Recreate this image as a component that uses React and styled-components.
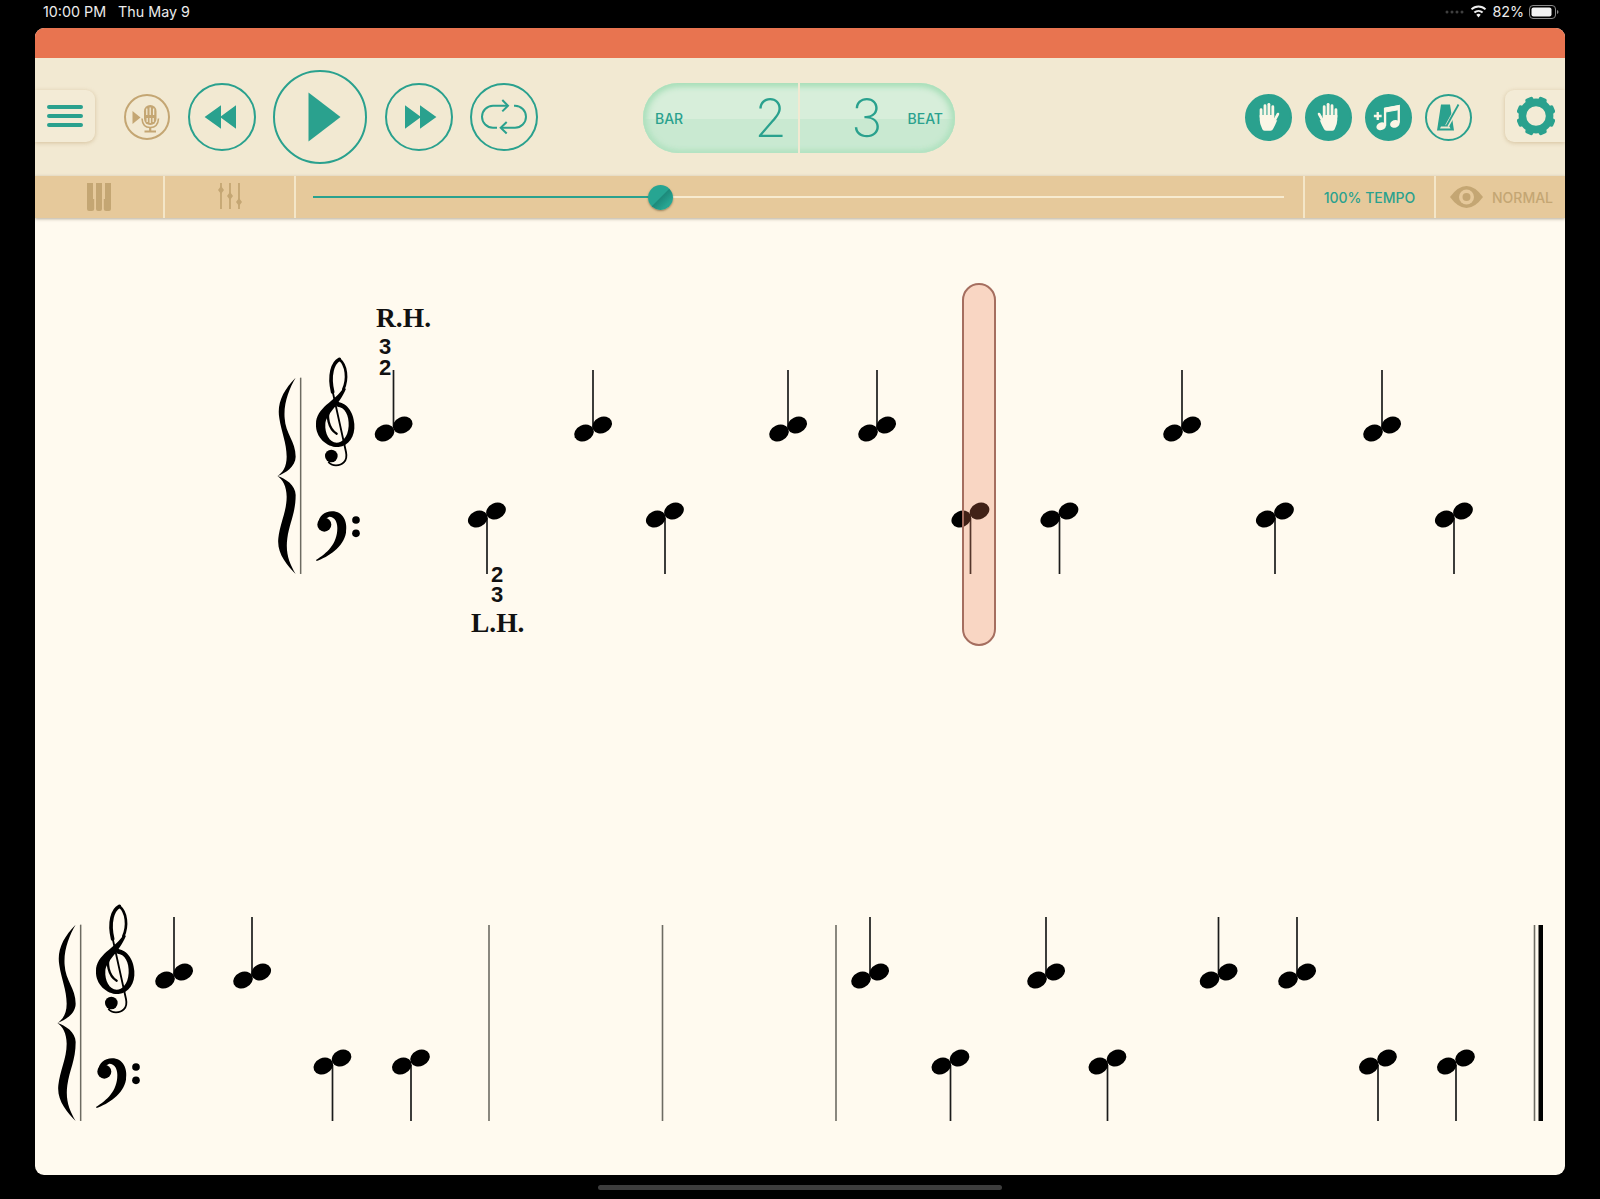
import styled, { createGlobalStyle } from "styled-components";

const TEAL = "#2aa18e";
const TAN = "#c4a673";

const GlobalStyle = createGlobalStyle`
  html, body {
    margin: 0;
    height: 100%;
    background: #000;
    overflow: hidden;
  }
`;

const Page = styled.div`
  width: 1600px;
  height: 1199px;
  background: #000;
  display: flex;
  flex-direction: column;
  font-family: Inter, "Liberation Sans", sans-serif;
`;

// STATUS BAR
const StatusBar = styled.div`
  height: 28px;
  display: flex;
  align-items: center;
  justify-content: space-between;
  padding: 0 41px 5px 43px;
  box-sizing: border-box;
  color: #ececec;
  font-size: 14.3px;
`;

const StatusGroup = styled.div`
  display: flex;
  align-items: center;
  gap: ${(p) => p.$gap || 12}px;
`;

const AppWindow = styled.div`
  width: 1530px;
  height: 1147px;
  margin-left: 35px;
  border-radius: 9px;
  overflow: hidden;
  background: #fffaef;
  display: flex;
  flex-direction: column;
`;

const TitleBar = styled.div`
  height: 30px;
  background: #e87450;
  flex: none;
`;

// TOOLBAR
const Toolbar = styled.div`
  height: 118px;
  flex: none;
  background: #f2e9d2;
  display: flex;
  align-items: center;
  justify-content: space-between;
`;

const Group = styled.div`
  display: flex;
  align-items: center;
  gap: ${(p) => p.$gap}px;
`;

const SideButton = styled.div`
  width: 60px;
  height: 52px;
  display: flex;
  align-items: center;
  justify-content: center;
  box-sizing: border-box;
  background: #f3ebd6;
  border-radius: ${(p) => (p.$right ? "9px 0 0 9px" : "0 9px 9px 0")};
  box-shadow: 0 1px 4px rgba(170, 135, 80, 0.4);
  margin-${(p) => (p.$right ? "left" : "right")}: ${(p) => (p.$right ? 33.5 : 29)}px;
  padding-left: ${(p) => (p.$right ? 2 : 0)}px;
  margin-top: -2px;
`;

const RoundButton = styled.div`
  width: ${(p) => p.$size}px;
  height: ${(p) => p.$size}px;
  flex: none;
  box-sizing: border-box;
  border-radius: 50%;
  border: 2px solid ${(p) => p.$color || TEAL};
  background: ${(p) => (p.$filled ? TEAL : "transparent")};
  display: flex;
  align-items: center;
  justify-content: center;
`;

const Counter = styled.div`
  width: 312px;
  height: 70px;
  margin-left: 105px;
  margin-top: 2px;
  border-radius: 35px;
  overflow: hidden;
  display: flex;
  position: relative;
  background: linear-gradient(#d7eeda 0 51%, #c9e9d1 51% 100%);
  box-shadow: inset 0 3px 6px #a9dfb9, inset 0 -2px 5px #b5e3c3, inset 4px 0 7px #b5e3c3, inset -4px 0 7px #b5e3c3;
  color: ${TEAL};
`;

const CounterHalf = styled.div`
  width: 50%;
  flex: none;
  box-sizing: border-box;
  display: flex;
  align-items: center;
  justify-content: space-between;
  padding: ${(p) => p.$padding};
  & + & {
    border-left: 2px solid #f2e9d2;
    margin-left: -1px;
  }
`;

const CounterLabel = styled.span`
  font-size: 14px;
  font-weight: 500;
  margin-top: 1px;
`;

const CounterValue = styled.span`
  font-size: 53px;
  font-weight: 200;
  line-height: 70px;
`;

// TEMPO BAR
const TempoBar = styled.div`
  height: 42px;
  flex: none;
  background: #e6c99b;
  display: flex;
  box-shadow: 0 1px 3px rgba(90, 80, 60, 0.45);
  position: relative;
`;

const TempoCell = styled.div`
  width: ${(p) => p.$width}px;
  flex: none;
  display: flex;
  align-items: center;
  justify-content: center;
  gap: 9px;
  box-sizing: border-box;
  padding-left: ${(p) => (p.$last ? 2 : 0)}px;
  border-right: ${(p) => (p.$last ? "none" : "2px solid #f4e6c8")};
  font-size: 14px;
  font-weight: 500;
  color: ${(p) => p.$color || TEAL};
`;

const SliderCell = styled.div`
  flex: 1;
  display: flex;
  align-items: center;
  padding: 0 19px 0 17px;
  border-right: 2px solid #f4e6c8;
`;

const SliderTrack = styled.div`
  height: 2px;
  flex: 1;
  background: #f7ebd0;
  position: relative;
`;

const SliderFill = styled.div`
  height: 2px;
  background: ${TEAL};
`;

const SliderKnob = styled.div`
  position: absolute;
  top: -11.5px;
  width: 25px;
  height: 25px;
  margin-left: -12px;
  border-radius: 50%;
  background: linear-gradient(135deg, #27a592 0 48%, #1d8a7b 52%, #27a592 78%);
  box-shadow: 0 1px 2px rgba(80, 60, 30, 0.5);
`;

// SCORE
const Score = styled.div`
  flex: 1;
  display: flex;
  flex-direction: column;
  padding-top: 65px;
`;

const SystemWrap = styled.div`
  position: relative;
  height: ${(p) => p.$height}px;
  margin-top: ${(p) => p.$top || 0}px;
`;

const Canvas = styled.svg`
  display: block;
  width: 1530px;
  height: 100%;
`;

const PlayHead = styled.div`
  position: absolute;
  left: 927px;
  top: 0;
  width: 34px;
  height: 363px;
  box-sizing: border-box;
  border: 2px solid #a56e5f;
  border-radius: 17px;
  background: rgba(232, 122, 84, 0.28);
`;

const HandLabel = styled.text`
  font-family: "Liberation Serif", serif;
  font-weight: 700;
  font-size: 27.5px;
  fill: #111;
`;

const Fingering = styled.text`
  font-family: "Liberation Sans", sans-serif;
  font-weight: 700;
  font-size: 22px;
  fill: #111;
  text-anchor: middle;
`;

const HomeIndicator = styled.div`
  width: 404px;
  height: 5px;
  margin: 10px auto 0;
  border-radius: 3px;
  background: #3d3d3d;
`;

// ICONS
const Icon = ({ size, children }) => (
  <svg width={size} height={size} viewBox={`${-size / 2} ${-size / 2} ${size} ${size}`}>
    {children}
  </svg>
);

const Hand = ({ flip }) => (
  <g transform={flip ? "scale(-1,1)" : undefined} fill="none" stroke="#fbf6e6" strokeLinecap="round">
    <g strokeWidth="2.9">
      <path d="M-7.6 0V-7.5" />
      <path d="M-3.6 0V-11.5" />
      <path d="M.4 0V-13" />
      <path d="M4.4 0V-10.5" />
    </g>
    <path d="M5.3 5 L9.6 -3" strokeWidth="2.8" />
    <path d="M-9 -2H5.8V4L9 3Q7 8 4.8 12Q4 14 2 14H-4Q-6 14 -6.5 12Q-9 7 -9 3Z" fill="#fbf6e6" stroke="none" />
  </g>
);

const Notes = () => (
  <g fill="#fbf6e6" stroke="#fbf6e6">
    <path d="M-15 -1H-7M-11 -5V3" strokeWidth="2.4" fill="none" />
    <path d="M-3.5 9V-8.5L10.5 -11V6" strokeWidth="2.4" fill="none" />
    <path d="M-3.5 -9L10.5 -11.5V-7.5L-3.5 -5Z" strokeWidth="1" />
    <ellipse cx="-7.5" cy="9.5" rx="5" ry="3.9" transform="rotate(-20 -7.5 9.5)" stroke="none" />
    <ellipse cx="6.5" cy="7" rx="5" ry="3.9" transform="rotate(-20 6.5 7)" stroke="none" />
  </g>
);

const Metronome = () => (
  <g>
    <path d="M-7 -12.5H2L6 13.5H-11Z" fill={TEAL} />
    <path d="M-1 9L10 -11" stroke="#f2e9d2" strokeWidth="4" />
    <path d="M-1.5 9L10.5 -12.5" stroke={TEAL} strokeWidth="1.8" />
    <path d="M-7 9.5H1.5L2.5 11.5H-8Z" fill="#f2e9d2" />
  </g>
);

const Mic = () => (
  <g>
    <path d="M-14.5 -6L-6.5 0.5L-14.5 7Z" fill={TAN} />
    <rect x="-3" y="-12" width="12.5" height="20" rx="6.2" fill={TAN} />
    <path d="M-.2 -8.5V-2M3.2 -9.5V-2M6.6 -8.5V-2M.2 1V5M3.2 1V6M6.2 1V5" stroke="#f2e9d2" strokeWidth="1.3" />
    <path d="M-5 1.5Q-4.5 10.5 3.2 10.5Q11 10.5 11.5 1.5" fill="none" stroke={TAN} strokeWidth="1.6" />
    <path d="M3.2 10V14M-2.5 14.5H9" stroke={TAN} strokeWidth="2.2" />
  </g>
);

const Gear = () => {
  const teeth = [0, 45, 90, 135, 180, 225, 270, 315];
  return (
    <g fill={TEAL}>
      {teeth.map((deg) => (
        <rect key={deg} x="-4.2" y="-19.6" width="8.4" height="7" rx="2" transform={`rotate(${deg + 22.5})`} />
      ))}
      <circle r="13.6" fill="none" stroke={TEAL} strokeWidth="7.6" />
    </g>
  );
};

// SCORE DRAWINGS, coordinates are page coordinates
const UpNote = ({ x, top }) => (
  <g>
    <line x1={x} x2={x} y1={top} y2={top + 58} stroke="#1b1b1b" strokeWidth="1.7" />
    <ellipse cx={x - 9} cy={top + 63} rx="10.2" ry="8" transform={`rotate(-25 ${x - 9} ${top + 63})`} />
    <ellipse cx={x + 9.2} cy={top + 55} rx="10.2" ry="8" transform={`rotate(-25 ${x + 9.2} ${top + 55})`} />
  </g>
);

const DownNote = ({ x, bottom }) => (
  <g>
    <line x1={x} x2={x} y1={bottom - 56} y2={bottom} stroke="#1b1b1b" strokeWidth="1.7" />
    <ellipse cx={x - 9.2} cy={bottom - 55} rx="10.2" ry="8" transform={`rotate(-25 ${x - 9.2} ${bottom - 55})`} />
    <ellipse cx={x + 9} cy={bottom - 63} rx="10.2" ry="8" transform={`rotate(-25 ${x + 9} ${bottom - 63})`} />
  </g>
);

const Barline = ({ x, top }) => (
  <line x1={x} x2={x} y1={top} y2={top + 196} stroke="#6d6b62" strokeWidth="1.6" />
);

// brace, barline and both clefs; drawn in 3x units, origin like the first system
const Clefs = ({ dx, dy }) => (
  <g transform={`translate(${260 + dx} ${290 + dy}) scale(0.3333)`}>
    <path d="M107 263C70 300 50 340 58 385C64 425 80 460 80 500C80 530 68 548 52 558C68 568 80 590 80 620C80 665 60 700 55 745C50 790 80 825 107 852C88 820 76 790 82 745C88 700 107 670 107 615C107 585 75 565 52 558C75 550 107 530 107 500C107 455 76 430 74 385C70 340 88 295 107 263Z" />
    <line x1="122" x2="122" y1="263" y2="852" stroke="#6d6b62" strokeWidth="4.5" />
    {/* treble */}
    <path d="M218 306C206 256 218 218 238 208" fill="none" stroke="#000" strokeWidth="11" strokeLinecap="round" />
    <path d="M238 208C260 226 264 266 250 298" fill="none" stroke="#000" strokeWidth="8" strokeLinecap="round" />
    <path d="M250 294C225 335 168 352 168 402C166 445 205 474 236 471C266 468 286 440 283 402C281 362 255 334 228 336L232 350C254 350 268 376 266 408C264 442 246 458 230 458C208 458 194 430 196 402C198 372 238 345 258 296Z" />
    <path d="M232 343C210 344 200 370 206 395C210 412 220 425 230 431" fill="none" stroke="#000" strokeWidth="7" strokeLinecap="round" />
    <path d="M217 300L258 486C264 514 246 526 228 526C218 526 210 522 205 516" fill="none" stroke="#000" strokeWidth="5.5" />
    <circle cx="214" cy="498" r="19" />
    {/* bass */}
    <circle cx="193" cy="704" r="21" />
    <path d="M175 700C176 680 193 664 216 664C250 664 264 696 258 728C250 772 205 800 170 813L168 810C200 790 232 762 232 714C232 695 224 680 208 680L190 690Z" />
    <circle cx="288" cy="690" r="11.5" />
    <circle cx="288" cy="730" r="11.5" />
  </g>
);

const upperOne = [393.5, 593, 788, 877, 1182, 1382];
const lowerOne = [487, 665, 970.5, 1059.5, 1275, 1454];
const upperTwo = [174, 252, 870, 1046, 1218.5, 1297];
const lowerTwo = [332.5, 411, 950.5, 1107.5, 1378, 1456];
const barsTwo = [489, 662.5, 836];

const App = () => {
  return (
    <Page>
      <GlobalStyle />
      <StatusBar>
        <StatusGroup>
          <span>10:00 PM</span>
          <span>Thu May 9</span>
        </StatusGroup>
        <StatusGroup $gap={5}>
          <svg width="20" height="4" viewBox="0 0 20 4">
            {[0, 5, 10, 15].map((x) => (
              <circle key={x} cx={x + 2} cy="2" r="1.5" fill="#3f3f3f" />
            ))}
          </svg>
          <svg width="17" height="13" viewBox="0 0 17 13">
            <path d="M8.5 12.5L6.3 9.8A3.4 3.4 0 0 1 10.7 9.8Z" fill="#eee" />
            <path d="M4.4 7.5A6 6 0 0 1 12.6 7.5M1.5 4.4A10 10 0 0 1 15.5 4.4" fill="none" stroke="#eee" strokeWidth="2" />
          </svg>
          <span>82%</span>
          <svg width="30" height="14" viewBox="0 0 30 14">
            <rect x=".5" y=".5" width="26" height="13" rx="3.5" fill="none" stroke="#8a8a8a" />
            <rect x="2.5" y="2.5" width="20" height="9" rx="2" fill="#f2f2f2" />
            <path d="M28 5V9Q29.5 8.5 29.5 7T28 5Z" fill="#8a8a8a" />
          </svg>
        </StatusGroup>
      </StatusBar>

      <AppWindow>
        <TitleBar />
        <Toolbar>
          <Group $gap={0}>
            <SideButton>
              <svg width="36" height="22" viewBox="0 0 36 22">
                <path d="M2 2H34M2 11H34M2 20H34" stroke={TEAL} strokeWidth="4" strokeLinecap="round" />
              </svg>
            </SideButton>
            <Group $gap={17.5}>
              <RoundButton $size={46} $color={TAN}>
                <Icon size={40}><Mic /></Icon>
              </RoundButton>
              <RoundButton $size={68}>
                <Icon size={50}>
                  <path d="M-17.4 0L-1 -11.7V11.7ZM-2 0L14 -11.7V11.7Z" fill={TEAL} />
                </Icon>
              </RoundButton>
              <RoundButton $size={94}>
                <Icon size={60}>
                  <path d="M-11.5 -24.5L20.5 0L-11.5 24.5Z" fill={TEAL} />
                </Icon>
              </RoundButton>
              <RoundButton $size={68}>
                <Icon size={50}>
                  <path d="M17.4 0L1 -11.7V11.7ZM2 0L-14 -11.7V11.7Z" fill={TEAL} />
                </Icon>
              </RoundButton>
              <RoundButton $size={68}>
                <Icon size={50}>
                  <g fill="none" stroke={TEAL} strokeWidth="2">
                    <path d="M3 -11.3H-11A11 11 0 0 0 -11 10.7H-7" />
                    <path d="M10 -11.3H11A11 11 0 0 1 11 10.7H-3" />
                    <path d="M-1.7 -17L4 -11.3L-1.7 -5.6M2.7 5L-3.3 10.7L2.7 16.4" />
                  </g>
                </Icon>
              </RoundButton>
            </Group>
            <Counter>
              <CounterHalf $padding="0 12px 0 12px">
                <CounterLabel>BAR</CounterLabel>
                <CounterValue>2</CounterValue>
              </CounterHalf>
              <CounterHalf $padding="0 11px 0 51px">
                <CounterValue>3</CounterValue>
                <CounterLabel>BEAT</CounterLabel>
              </CounterHalf>
            </Counter>
          </Group>
          <Group $gap={0}>
            <Group $gap={13}>
              <RoundButton $size={47} $filled>
                <Icon size={44}><Hand /></Icon>
              </RoundButton>
              <RoundButton $size={47} $filled>
                <Icon size={44}><Hand flip /></Icon>
              </RoundButton>
              <RoundButton $size={47} $filled>
                <Icon size={44}><Notes /></Icon>
              </RoundButton>
              <RoundButton $size={47}>
                <Icon size={42}><Metronome /></Icon>
              </RoundButton>
            </Group>
            <SideButton $right>
              <Icon size={44}><Gear /></Icon>
            </SideButton>
          </Group>
        </Toolbar>

        <TempoBar>
          <TempoCell $width={130}>
            <svg width="24" height="28" viewBox="0 0 24 28">
              <path d="M0 0H6V16H7.2V26Q7.2 28 5 28H2Q0 28 0 26ZM9 0H15V26Q15 28 13 28H11Q9 28 9 26ZM18 0H24V26Q24 28 22 28H19Q16.8 28 16.8 26V16H18Z" fill={TAN} />
            </svg>
          </TempoCell>
          <TempoCell $width={131}>
            <svg width="24" height="28" viewBox="0 0 24 28">
              <g stroke={TAN} strokeWidth="1.8">
                <path d="M3 0V26M12 0V26M21 0V26" />
              </g>
              <g fill={TAN}>
                <path d="M3 3L6 7L3 11L0 7Z" />
                <path d="M12 9L15 13L12 17L9 13Z" />
                <path d="M21 15L24 19L21 23L18 19Z" />
              </g>
            </svg>
          </TempoCell>
          <SliderCell>
            <SliderTrack>
              <SliderFill style={{ width: `${(100 * 347.5) / 972}%` }} />
              <SliderKnob style={{ left: `${(100 * 347.5) / 972}%` }} />
            </SliderTrack>
          </SliderCell>
          <TempoCell $width={131}>100% TEMPO</TempoCell>
          <TempoCell $width={129} $last $color={TAN}>
            <svg width="33" height="22" viewBox="0 0 33 22">
              <path d="M0 11Q8 0 16.5 0T33 11Q25 22 16.5 22T0 11Z" fill={TAN} />
              <circle cx="16.5" cy="11" r="7.5" fill="#e6c99b" />
              <circle cx="16.5" cy="11" r="4" fill={TAN} />
            </svg>
            NORMAL
          </TempoCell>
        </TempoBar>

        <Score>
          <SystemWrap $height={365}>
            <Canvas viewBox="35 283 1530 365">
              <Clefs dx={0} dy={0} />
              {upperOne.map((x) => (
                <UpNote key={x} x={x} top={370} />
              ))}
              {lowerOne.map((x) => (
                <DownNote key={x} x={x} bottom={574} />
              ))}
              <HandLabel x="376" y="327">R.H.</HandLabel>
              <Fingering x="385" y="354">3</Fingering>
              <Fingering x="385" y="375">2</Fingering>
              <Fingering x="497" y="582">2</Fingering>
              <Fingering x="497" y="602">3</Fingering>
              <HandLabel x="471" y="632">L.H.</HandLabel>
            </Canvas>
            <PlayHead />
          </SystemWrap>
          <SystemWrap $height={235} $top={252}>
            <Canvas viewBox="35 900 1530 235">
              <Clefs dx={-220} dy={547} />
              {upperTwo.map((x) => (
                <UpNote key={x} x={x} top={917} />
              ))}
              {lowerTwo.map((x) => (
                <DownNote key={x} x={x} bottom={1121} />
              ))}
              {barsTwo.map((x) => (
                <Barline key={x} x={x} top={925} />
              ))}
              <Barline x={1534.5} top={925} />
              <rect x="1538.5" y="925" width="4.5" height="196" />
            </Canvas>
          </SystemWrap>
        </Score>
      </AppWindow>
      <HomeIndicator />
    </Page>
  );
};

export default App;
